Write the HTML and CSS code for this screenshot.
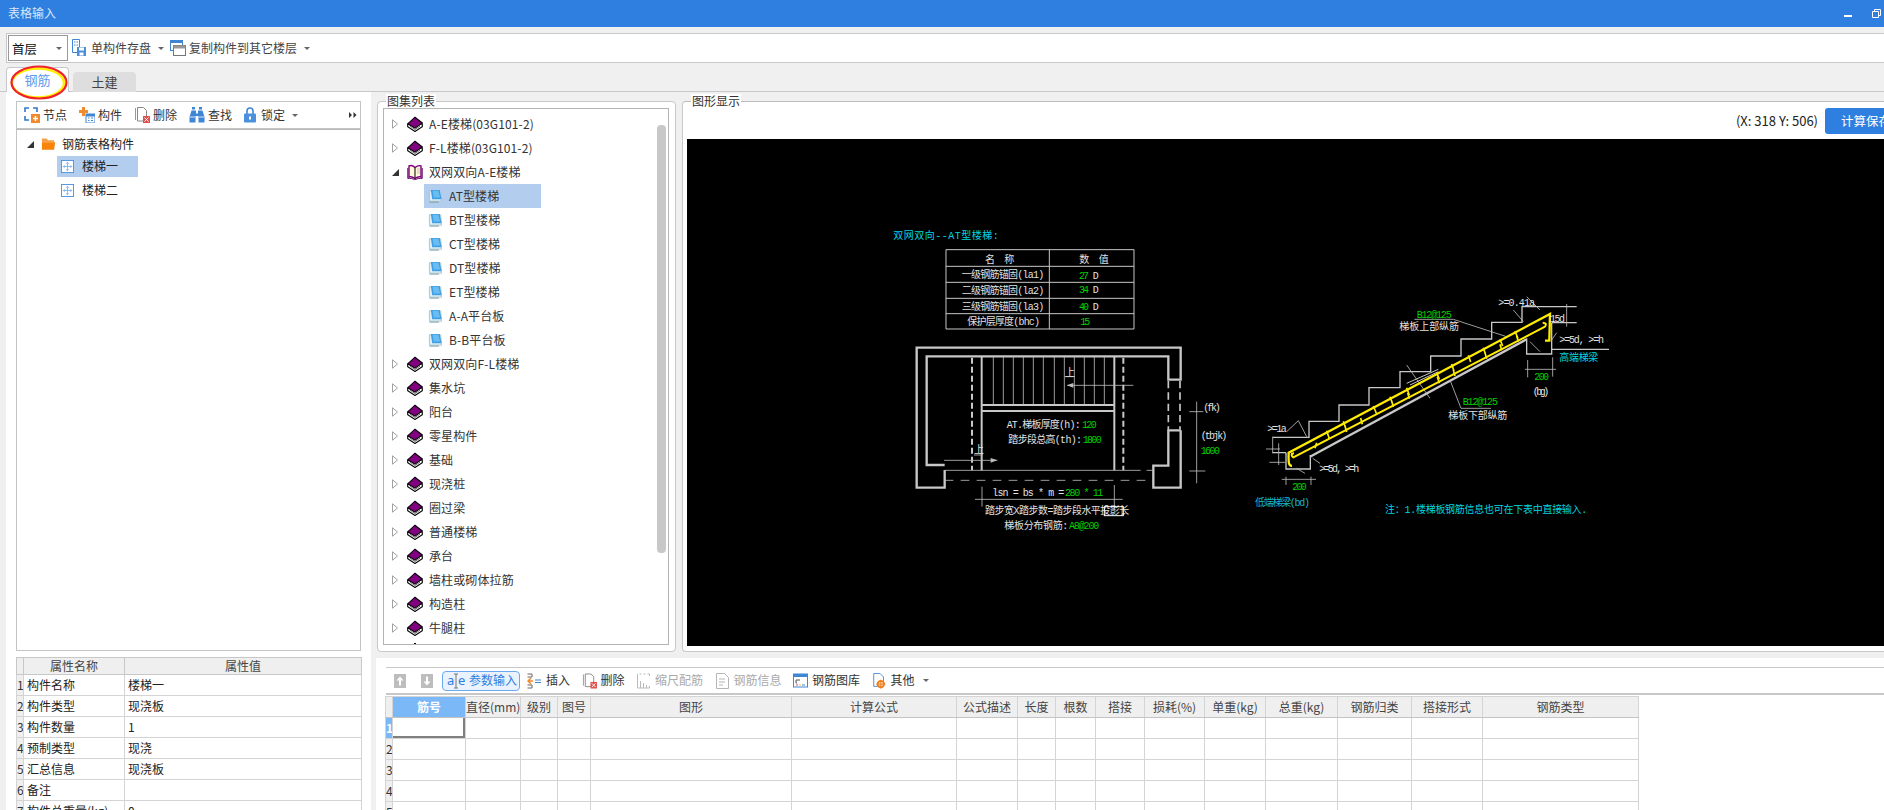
FILE: index.html
```html
<!DOCTYPE html>
<html lang="zh">
<head>
<meta charset="utf-8">
<title>表格输入</title>
<link rel="stylesheet" href="styles.css">
</head>
<body>
<svg class="defs" aria-hidden="true">
  <symbol id="i-book" viewBox="0 0 16 16"><path d="M.7 8v2.600L8 15.500l7.300-4.900V8z" fill="#fff" stroke="#000" stroke-width="1.100"/><path d="M.7 7.800L8 1.200l7.300 5.800L8 12.200z" fill="#800080" stroke="#000" stroke-width="1.100"/><path d="M3 10.200l5 3.300 5-3.300" fill="none" stroke="#555" stroke-width=".8"/></symbol>
  <symbol id="i-open" viewBox="0 0 16 16"><path d="M2 2c2-1 4-.5 6 1.500C10 2 12 1 14 2v11c-2-.5-4 0-6 1.500C6 13 4 12.500 2 13z" fill="#fff8d8" stroke="#800080" stroke-width="1.400"/><path d="M8 3.500v11" stroke="#000"/><path d="M.8 4v10.500c2.500-.5 5 0 7.200 1.500 2.200-1.500 4.700-2 7.200-1.500V4" fill="none" stroke="#600060"/><path d="M10 5h3M10 7h3M10 9h3" stroke="#aaa" stroke-width=".7"/></symbol>
  <symbol id="i-sheet" viewBox="0 0 16 16"><path d="M1.500 2.500h12l1 11H1.500z" fill="#dfeef5" stroke="#a9c4d2"/><path d="M3 1.500h9.500l2 10H4.500z" fill="#3f9fe6"/><path d="M5 2.500h6l2 7H6z" fill="#69bdf0"/><path d="M1.500 14.500h10" stroke="#7d97a5"/></symbol>
  <symbol id="i-folder" viewBox="0 0 16 14"><path d="M1 1h5l1.500 2H14v2H1z" fill="#f7a04a"/><path d="M1 5h14l-1 8H1z" fill="#f88308"/></symbol>
  <symbol id="i-item" viewBox="0 0 14 14"><rect x=".5" y=".5" width="13" height="13" fill="#fff" stroke="#4c94e0"/><path d="M7 2.500v9M2.500 7h9M5.500 4L7 2.500 8.500 4M5.500 10L7 11.500 8.500 10M4 5.500L2.500 7 4 8.500M10 5.500L11.500 7 10 8.500" fill="none" stroke="#78aee8" stroke-width=".9"/></symbol>
  <symbol id="i-node" viewBox="0 0 16 16"><path d="M1 5V1h4M9 1h4v4M1 9v4h4" fill="none" stroke="#2c79c9" stroke-width="1.600"/><rect x="7" y="7" width="9" height="9" fill="#f08a2c"/><path d="M11.500 9v5M9 11.500h5" stroke="#fff" stroke-width="1.400"/></symbol>
  <symbol id="i-comp" viewBox="0 0 16 16"><path d="M3 0h3v3h3v3H6v3H3V6H0V3h3z" fill="#f08a2c"/><rect x="7" y="7" width="9" height="9" fill="#fff" stroke="#3f86d4"/><rect x="7" y="7" width="9" height="2.500" fill="#3f86d4"/><path d="M9 11h1.500M12 11h2M9 13.500h1.500M12 13.500h2" stroke="#3f86d4"/></symbol>
  <symbol id="i-del" viewBox="0 0 16 16"><path d="M1.500 1v12" stroke="#999"/><path d="M3.500.5h6l3 3V14h-9z" fill="#fff" stroke="#888"/><rect x="9" y="9" width="7" height="7" fill="#e0504f"/><path d="M10.500 10.500l4 4M14.500 10.500l-4 4" stroke="#fff"/></symbol>
  <symbol id="i-find" viewBox="0 0 16 16"><path d="M3 0h3v2.500H3zM10 0h3v2.500h-3z" fill="#3f86d4"/><path d="M2.500 3.500h4.500v3h2v-3h4.500L15.500 10v5.500H9.500V9H6.500v6.500H.5V10z" fill="#3f86d4"/><path d="M1 10h5M10 10h5" stroke="#fff" stroke-width=".8"/></symbol>
  <symbol id="i-lock" viewBox="0 0 12 16"><path d="M3 7V4a3 3 0 016 0v3" fill="none" stroke="#3f86d4" stroke-width="1.600"/><rect y="6.500" width="12" height="9" rx="1" fill="#4a90dd"/><rect x="5" y="9.500" width="2" height="3" fill="#fff"/></symbol>
  <symbol id="i-save" viewBox="0 0 14 18"><path d="M.5.500h7v13h-7z" fill="#fff" stroke="#3f86d4"/><path d="M2 3h1.500M4.500 3H6M2 6h1.500M4.500 6H6" stroke="#3f86d4"/><rect x="5" y="8" width="9" height="9" fill="#4a8fd8"/><rect x="7" y="8.500" width="5" height="3" fill="#fff"/><rect x="7.500" y="13.500" width="4" height="3" fill="#fff"/></symbol>
  <symbol id="i-copy" viewBox="0 0 16 16"><rect x=".5" y=".5" width="12" height="10" fill="#fff" stroke="#3f86d4"/><rect x=".5" y=".5" width="12" height="2.500" fill="#3f86d4"/><rect x="3.500" y="5.500" width="12" height="10" fill="#fff" stroke="#777"/><rect x="3.500" y="5.500" width="12" height="3" fill="#999"/></symbol>
  <symbol id="i-up" viewBox="0 0 12 14"><rect width="12" height="14" fill="#bdbdbd"/><path d="M6 2.500L2.500 6.500H5v5h2v-5h2.500z" fill="#fff"/></symbol>
  <symbol id="i-down" viewBox="0 0 12 14"><rect width="12" height="14" fill="#bdbdbd"/><path d="M6 11.500L2.500 7.500H5v-5h2v5h2.500z" fill="#fff"/></symbol>
  <symbol id="i-insert" viewBox="0 0 15 16"><path d="M.5 1H5v3H.5M.5 12H5v3H.5" fill="none" stroke="#666"/><path d="M1 8h5M4 5L1 8l3 3" fill="none" stroke="#f08a2c" stroke-width="1.500"/><path d="M8 7h6M8 9.500h6" stroke="#3f86d4" stroke-width="1.200"/></symbol>
  <symbol id="i-scale" viewBox="0 0 14 16"><path d="M1 1v14M1 15h12M4 15V8M7 15v-5M10 15v-3M13 15v-2" fill="none" stroke="#bbb"/><path d="M3 1h2M7 1h2M11 1h2v2" fill="none" stroke="#bbb"/></symbol>
  <symbol id="i-doc" viewBox="0 0 14 16"><path d="M1 .5h8l4 4V15.500H1z" fill="#fff" stroke="#b5b5b5"/><path d="M3.500 6h6M3.500 9h6M3.500 12h4" stroke="#b5b5b5"/></symbol>
  <symbol id="i-lib" viewBox="0 0 15 15"><rect x=".5" y=".5" width="14" height="13" fill="#fff" stroke="#3f86d4"/><rect x=".5" y=".5" width="14" height="3" fill="#3f86d4"/><path d="M3 6.500h4M3 6.500v3M3 9.500h1" stroke="#555"/><path d="M3 11.500h2" stroke="#e0504f"/><path d="M6 11.500h2" stroke="#f3c331"/><path d="M9 11.500h3" stroke="#3f86d4"/></symbol>
  <symbol id="i-other" viewBox="0 0 14 18"><path d="M.5.500h7l4 4V15H.5z" fill="#fff" stroke="#3f86d4"/><circle cx="8.500" cy="12.500" r="3.600" fill="none" stroke="#f08020" stroke-width="2.200"/><path d="M8.500 7.500v10M3.500 12.500h10" stroke="#f08020" stroke-width="1.200"/></symbol>
  <symbol id="i-more" viewBox="0 0 8 8"><path d="M0 1l3 3-3 3zM4.500 1l3 3-3 3z" fill="#333"/></symbol>
  <symbol id="i-closed" viewBox="0 0 6 10"><path d="M.5.800l5 4.200-5 4.200z" fill="#fff" stroke="#a0a0a0"/></symbol>
  <symbol id="i-opened" viewBox="0 0 7 7"><path d="M7 0v7H0z" fill="#333"/></symbol>
  <symbol id="i-restore" viewBox="0 0 9 9"><path d="M2.500 2.500V.5h6v6h-2M.5 2.500h6v6h-6z" fill="none" stroke="#fff"/></symbol>
</svg>

<div class="app">
  <header class="titlebar">
    <span class="title">表格输入</span>
    <span class="minimize"></span>
    <svg class="restore"><use href="#i-restore"/></svg>
  </header>

  <div class="floorbar">
    <div class="floor-select"><span>首层</span><i class="caret"></i></div>
    <div class="fb-item"><svg class="ic-save"><use href="#i-save"/></svg><span>单构件存盘</span><i class="caret"></i></div>
    <div class="fb-item"><svg class="ic16"><use href="#i-copy"/></svg><span>复制构件到其它楼层</span><i class="caret"></i></div>
  </div>

  <div class="tabs">
    <div class="tab tab-active">钢筋</div>
    <div class="tab">土建</div>
    <svg class="tab-mark" viewBox="0 0 60 36"><ellipse cx="29" cy="18" rx="26" ry="14.500" fill="none" stroke="#ffee00" stroke-width="2.500"/><ellipse cx="30" cy="17.500" rx="27.500" ry="16" fill="none" stroke="#f0212a" stroke-width="2.200"/></svg>
  </div>

  <main class="workspace">
    <aside class="left">
      <div class="toolbar left-tools">
        <div class="btn"><svg class="ic16"><use href="#i-node"/></svg><span>节点</span></div>
        <div class="btn"><svg class="ic16"><use href="#i-comp"/></svg><span>构件</span></div>
        <div class="btn"><svg class="ic16"><use href="#i-del"/></svg><span>删除</span></div>
        <div class="btn"><svg class="ic16"><use href="#i-find"/></svg><span>查找</span></div>
        <div class="btn"><svg class="ic-lock"><use href="#i-lock"/></svg><span>锁定</span><i class="caret caret-gap"></i></div>
        <svg class="ic-more"><use href="#i-more"/></svg>
      </div>
      <div class="comp-tree">
        <div class="ct-root"><svg class="tw-open"><use href="#i-opened"/></svg><svg class="ic-folder"><use href="#i-folder"/></svg><span>钢筋表格构件</span></div>
        <div class="ct-item ct-selected"><svg class="ic-item"><use href="#i-item"/></svg><span>楼梯一</span></div>
        <div class="ct-item"><svg class="ic-item"><use href="#i-item"/></svg><span>楼梯二</span></div>
      </div>
      <table class="props">
        <colgroup><col class="p-n"><col class="p-k"><col class="p-v"></colgroup>
        <thead><tr><th></th><th>属性名称</th><th>属性值</th></tr></thead>
        <tbody>
          <tr><td class="num">1</td><td>构件名称</td><td>楼梯一</td></tr>
          <tr><td class="num">2</td><td>构件类型</td><td>现浇板</td></tr>
          <tr><td class="num">3</td><td>构件数量</td><td>1</td></tr>
          <tr><td class="num">4</td><td>预制类型</td><td>现浇</td></tr>
          <tr><td class="num">5</td><td>汇总信息</td><td>现浇板</td></tr>
          <tr><td class="num">6</td><td>备注</td><td></td></tr>
          <tr><td class="num">7</td><td>构件总重量(kg)</td><td>0</td></tr>
        </tbody>
      </table>
    </aside>

    <section class="main">
      <div class="upper">
        <div class="group group-list">
          <span class="legend">图集列表</span>
          <div class="atlas">
            <div class="row"><svg class="tw"><use href="#i-closed"/></svg><svg class="ic-book"><use href="#i-book"/></svg><span>A-E楼梯(03G101-2)</span></div>
            <div class="row"><svg class="tw"><use href="#i-closed"/></svg><svg class="ic-book"><use href="#i-book"/></svg><span>F-L楼梯(03G101-2)</span></div>
            <div class="row"><svg class="tw tw-o"><use href="#i-opened"/></svg><svg class="ic-book"><use href="#i-open"/></svg><span>双网双向A-E楼梯</span></div>
            <div class="row child child-selected"><svg class="ic-sheet"><use href="#i-sheet"/></svg><span>AT型楼梯</span></div>
            <div class="row child"><svg class="ic-sheet"><use href="#i-sheet"/></svg><span>BT型楼梯</span></div>
            <div class="row child"><svg class="ic-sheet"><use href="#i-sheet"/></svg><span>CT型楼梯</span></div>
            <div class="row child"><svg class="ic-sheet"><use href="#i-sheet"/></svg><span>DT型楼梯</span></div>
            <div class="row child"><svg class="ic-sheet"><use href="#i-sheet"/></svg><span>ET型楼梯</span></div>
            <div class="row child"><svg class="ic-sheet"><use href="#i-sheet"/></svg><span>A-A平台板</span></div>
            <div class="row child"><svg class="ic-sheet"><use href="#i-sheet"/></svg><span>B-B平台板</span></div>
            <div class="row"><svg class="tw"><use href="#i-closed"/></svg><svg class="ic-book"><use href="#i-book"/></svg><span>双网双向F-L楼梯</span></div>
            <div class="row"><svg class="tw"><use href="#i-closed"/></svg><svg class="ic-book"><use href="#i-book"/></svg><span>集水坑</span></div>
            <div class="row"><svg class="tw"><use href="#i-closed"/></svg><svg class="ic-book"><use href="#i-book"/></svg><span>阳台</span></div>
            <div class="row"><svg class="tw"><use href="#i-closed"/></svg><svg class="ic-book"><use href="#i-book"/></svg><span>零星构件</span></div>
            <div class="row"><svg class="tw"><use href="#i-closed"/></svg><svg class="ic-book"><use href="#i-book"/></svg><span>基础</span></div>
            <div class="row"><svg class="tw"><use href="#i-closed"/></svg><svg class="ic-book"><use href="#i-book"/></svg><span>现浇桩</span></div>
            <div class="row"><svg class="tw"><use href="#i-closed"/></svg><svg class="ic-book"><use href="#i-book"/></svg><span>圈过梁</span></div>
            <div class="row"><svg class="tw"><use href="#i-closed"/></svg><svg class="ic-book"><use href="#i-book"/></svg><span>普通楼梯</span></div>
            <div class="row"><svg class="tw"><use href="#i-closed"/></svg><svg class="ic-book"><use href="#i-book"/></svg><span>承台</span></div>
            <div class="row"><svg class="tw"><use href="#i-closed"/></svg><svg class="ic-book"><use href="#i-book"/></svg><span>墙柱或砌体拉筋</span></div>
            <div class="row"><svg class="tw"><use href="#i-closed"/></svg><svg class="ic-book"><use href="#i-book"/></svg><span>构造柱</span></div>
            <div class="row"><svg class="tw"><use href="#i-closed"/></svg><svg class="ic-book"><use href="#i-book"/></svg><span>牛腿柱</span></div>
            <div class="scrollthumb"></div>
            <i class="clip-dot"></i>
          </div>
        </div>

        <div class="group group-view">
          <span class="legend legend-view">图形显示</span>
          <div class="viewhead">
            <span class="coords">(X: 318 Y: 506)</span>
            <div class="calc">计算保存</div>
          </div>
          <svg class="cad" viewBox="687 139 1197 507" preserveAspectRatio="xMinYMin meet">
            <g transform="translate(870 215) scale(.33333)">
              <text class="t cy" x="70" y="64" textLength="316">双网双向--AT型楼梯:</text>
              <path class="w2" d="M228 104H792V342H228zM228 154H792M228 202H792M228 250H792M228 296H792M538 104V342" stroke-width="3"/>
              <text class="t wh" x="345" y="136" textLength="88">名 称</text>
              <text class="t wh" x="628" y="136" textLength="88">数 值</text>
              <text class="t wh" x="275" y="182" textLength="248">一级钢筋锚固(la1)</text>
              <text class="t wh" x="275" y="230" textLength="248">二级钢筋锚固(la2)</text>
              <text class="t wh" x="275" y="277" textLength="248">三级钢筋锚固(la3)</text>
              <text class="t wh" x="292" y="322" textLength="218">保护层厚度(bhc)</text>
              <text class="t gr" x="627" y="184" textLength="30">27</text><text class="t wh" x="668" y="184">D</text>
              <text class="t gr" x="627" y="227" textLength="30">34</text><text class="t wh" x="668" y="227">D</text>
              <text class="t gr" x="627" y="277" textLength="30">40</text><text class="t wh" x="668" y="277">D</text>
              <text class="t gr" x="631" y="322" textLength="30">15</text>

              <path class="w2" stroke-width="7" d="M224 765V818H140V398H932V494H895V424H170V750H224M932 646V818H850V752H895V646H932"/>
              <path class="w2" stroke-width="6" d="M335 424V766M733 424V766M335 570H733M335 588H733"/>
              <path class="w2" stroke-width="6" stroke-dasharray="18 9" d="M306 428V766M760 428V766"/>
              <path class="w2" stroke-width="5" stroke-dasharray="22 12" d="M895 498V644M930 498V644"/>
              <path class="w1" d="M370 424V570M400 424V570M430 424V570M460 424V570M490 424V570M520 424V570M553 424V570M583 424V570M613 424V570M643 424V570M673 424V570M703 424V570"/>
              <path class="w1" stroke-width="3" d="M224 766H812M830 766H848"/>
              <path class="w1" stroke-width="3" stroke-dasharray="26 22" d="M224 796H850"/>
              <path class="w1" stroke-width="2.500" d="M592 511H790M222 736H382M584 485H610M312 720H338"/>
              <path class="f" d="M590 511l20-7v14zM382 736l-20-7v14z"/>
              <text class="t wh" x="585" y="475">上</text>
              <text class="t wh" x="312" y="707">上</text>
              <path class="w1" stroke-width="2" d="M980 560V805M958 590H1000M958 768H1006M315 853H758M336 815V875M733 810V885"/>
              <text class="t wh" x="1000" y="582" textLength="52">(fk)</text>
              <text class="t wh" x="992" y="665" textLength="80">(tbjk)</text>
              <text class="t gr" x="992" y="710" textLength="58">1600</text>
              <text class="t wh" x="410" y="632" textLength="222">AT.梯板厚度(h):</text>
              <text class="t gr" x="636" y="632" textLength="44">120</text>
              <text class="t wh" x="415" y="676" textLength="221">踏步段总高(th):</text>
              <text class="t gr" x="638" y="676" textLength="57">1800</text>
              <text class="t wh" x="367" y="835" textLength="216" xml:space="preserve">lsn = bs * m =</text>
              <text class="t gr" x="585" y="835" textLength="115" xml:space="preserve">280 * 11</text>
              <text class="t wh" x="345" y="890" textLength="433">踏步宽X踏步数=踏步段水平投影长</text>
              <rect x="703" y="875" width="57" height="27" fill="none" stroke="#fff" stroke-width="3"/>
              <text class="t wh" x="403" y="935" textLength="192">梯板分布钢筋:</text>
              <text class="t gr" x="597" y="935" textLength="91">A8@200</text>
            </g>
            <g transform="translate(1230 280) scale(.33333)">
              <path class="w2" stroke-width="4" d="M128 472H237V424H327V375H417V323H510V275H602V228H693V177H785V127H876V80H1040M965 128H1040M965 128V222H890V175M168 518V567H241V525M128 518H168M965 208H1137"/>
              <path class="w2" stroke-width="7" d="M240 530L890 178"/>
              <path class="w2" stroke-width="3" d="M530 310L625 268M540 315L625 275"/>
              <path class="w1" stroke-width="2" d="M670 118L830 170M553 118H670M693 385L660 300M693 385H783M530 255L600 355M850 90L880 125M890 50L930 90M1010 72V140M980 158L965 180M900 185L930 215M885 268H978M893 240V292M968 232V290M155 598H258M168 590V615M243 590V615M128 470V520M108 507H150M118 547H165M146 490V555M170 455L205 422L230 470M248 535L270 550M200 565L225 580"/>
              <path class="y" stroke-width="7" d="M186 558C176 558 175 550 176 518L960 102L958 182H945"/>
              <path class="y" stroke-width="6" d="M945 140L190 532C183 528 183 520 192 520M945 140C950 132 948 128 938 128"/>
              <path class="y" stroke-width="5" d="M290 452L298 476M340 424L348 448M430 378L440 402M480 350L488 372M530 323L538 346M620 278L628 298M665 252L672 274M715 226L722 246M760 203L766 222M810 178L818 198M855 153L864 176M255 505L260 488M350 456L345 438M397 433L392 414M490 381L485 363M538 356L533 338M628 310L622 290M675 288L670 270M770 236L765 218M815 211L810 193M865 185L860 168"/>
              <text class="t gr" x="560" y="107" textLength="105">B12@125</text>
              <text class="t wh" x="508" y="143" textLength="179">梯板上部纵筋</text>
              <text class="t gr" x="698" y="368" textLength="106">B12@125</text>
              <text class="t wh" x="655" y="410" textLength="177">梯板下部纵筋</text>
              <text class="t wh" x="805" y="72" textLength="110">&gt;=0.41a</text>
              <text class="t wh" x="960" y="118" textLength="45">15d</text>
              <text class="t wh" x="988" y="182" textLength="134">&gt;=5d, &gt;=h</text>
              <text class="t cy" x="988" y="237" textLength="117">高端梯梁</text>
              <text class="t gr" x="913" y="292" textLength="44">200</text>
              <text class="t wh" x="908" y="338" textLength="50">(bg)</text>
              <text class="t wh" x="112" y="450" textLength="58">&gt;=1a</text>
              <text class="t wh" x="268" y="570" textLength="120">&gt;=5d, &gt;=h</text>
              <text class="t gr" x="187" y="623" textLength="43">200</text>
              <text class="t cyd" x="75" y="670" textLength="165">低端梯梁(bd)</text>
              <text class="t cy" x="465" y="692" textLength="607">注：1.楼梯板钢筋信息也可在下表中直接输入.</text>
            </g>
          </svg>
        </div>
      </div>

      <div class="lower">
        <div class="toolbar grid-tools">
          <div class="btn btn-up"><svg class="ic-arrow"><use href="#i-up"/></svg></div>
          <div class="btn btn-down"><svg class="ic-arrow"><use href="#i-down"/></svg></div>
          <div class="btn btn-active"><svg class="ic-param" viewBox="0 0 18 16"><text x="0" y="12" class="param-t">a</text><text x="11" y="12" class="param-t">e</text><path d="M9 1v14M7 1h4M7 15h4" stroke="#777" fill="none"/></svg><span>参数输入</span></div>
          <div class="btn"><svg class="ic15"><use href="#i-insert"/></svg><span>插入</span></div>
          <div class="btn"><svg class="ic15"><use href="#i-del"/></svg><span>删除</span></div>
          <div class="btn btn-off"><svg class="ic15"><use href="#i-scale"/></svg><span>缩尺配筋</span></div>
          <div class="btn btn-off"><svg class="ic15"><use href="#i-doc"/></svg><span>钢筋信息</span></div>
          <div class="btn"><svg class="ic15"><use href="#i-lib"/></svg><span>钢筋图库</span></div>
          <div class="btn"><svg class="ic15"><use href="#i-other"/></svg><span>其他</span><i class="caret caret-gap"></i></div>
        </div>
        <table class="rebar">
          <colgroup>
            <col class="c7"><col class="c73"><col class="c55"><col class="c37"><col class="c33"><col class="c201"><col class="c165"><col class="c61"><col class="c38"><col class="c40"><col class="c49"><col class="c60"><col class="c61"><col class="c72"><col class="c74"><col class="c71"><col class="c156">
          </colgroup>
          <thead>
            <tr><th></th><th class="hot">筋号</th><th>直径(mm)</th><th>级别</th><th>图号</th><th>图形</th><th>计算公式</th><th>公式描述</th><th>长度</th><th>根数</th><th>搭接</th><th>损耗(%)</th><th>单重(kg)</th><th>总重(kg)</th><th>钢筋归类</th><th>搭接形式</th><th>钢筋类型</th></tr>
          </thead>
          <tbody>
            <tr><td class="num hot">1</td><td class="cur"></td><td></td><td></td><td></td><td></td><td></td><td></td><td></td><td></td><td></td><td></td><td></td><td></td><td></td><td></td><td></td></tr>
            <tr><td class="num">2</td><td></td><td></td><td></td><td></td><td></td><td></td><td></td><td></td><td></td><td></td><td></td><td></td><td></td><td></td><td></td><td></td></tr>
            <tr><td class="num">3</td><td></td><td></td><td></td><td></td><td></td><td></td><td></td><td></td><td></td><td></td><td></td><td></td><td></td><td></td><td></td><td></td></tr>
            <tr><td class="num">4</td><td></td><td></td><td></td><td></td><td></td><td></td><td></td><td></td><td></td><td></td><td></td><td></td><td></td><td></td><td></td><td></td></tr>
            <tr><td class="num">5</td><td></td><td></td><td></td><td></td><td></td><td></td><td></td><td></td><td></td><td></td><td></td><td></td><td></td><td></td><td></td><td></td></tr>
          </tbody>
        </table>
      </div>
    </section>
  </main>
</div>
</body>
</html>
```
FILE: styles.css
```css
* { box-sizing: border-box; }
html, body { margin: 0; height: 100%; overflow: hidden; }
body {
  font: 12px/1.2 "Noto Sans CJK SC", "Noto Sans", sans-serif;
  color: #222;
  background: #f0f0f0;
}
.defs { display: none; }
svg { display: block; flex: none; }
.app { width: 1884px; height: 810px; display: flex; flex-direction: column; overflow: hidden; }

/* title bar */
.titlebar {
  height: 27px; flex: none; background: #2e7fe0; color: #d9e8fb;
  display: flex; align-items: center; padding-left: 8px;
}
.title { flex: 1; }
.minimize { width: 8px; height: 2px; background: #fff; margin: 4px 20px 0 0; }
.restore { width: 9px; height: 9px; margin: -1px 3px 0 0; }

/* floor bar */
.floorbar {
  margin: 6px 0 0 6px; height: 30px; flex: none; background: #fff;
  border: 1px solid #c8c8cc; border-width: 1px 0 1px 1px;
  display: flex; align-items: center; padding-left: 1px;
}
.floor-select {
  width: 60px; height: 26px; border: 1px solid #9a9a9a;
  display: flex; align-items: center; justify-content: space-between; padding: 0 5px 0 3px;
  font-size: 12.500px; color: #111;
}
.fb-item { display: flex; align-items: center; margin-left: 4px; color: #444; }
.fb-item + .fb-item { margin-left: 6px; }
.fb-item .caret { margin-left: 7px; }
.ic-save { width: 14px; height: 18px; margin-right: 5px; }
.fb-item .ic16 { margin-right: 3px; }
.caret { display: inline-block; width: 0; height: 0; border: 3px solid transparent; border-top: 3px solid #666; border-bottom: 0; }
.caret-gap { margin-left: 4px; }

/* tabs */
.tabs {
  position: relative; height: 29px; flex: none; padding: 4px 0 0 6px;
  display: flex; align-items: flex-end; gap: 4px; border-bottom: 1px solid #c8c8cc;
}
.tab {
  width: 63px; height: 20px; margin-bottom: -1px; background: #dedede; color: #444;
  border-radius: 4px 4px 0 0; text-align: center; line-height: 20px; font-size: 13px;
}
.tab-active {
  height: 25px; background: #fff; color: #5b9bee; line-height: 24px;
  border: 1px solid #c8c8cc; border-bottom: 0; position: relative; z-index: 1;
}
.tab-mark { position: absolute; left: 9px; top: 2px; width: 60px; height: 36px; z-index: 2; }

/* workspace */
.workspace { flex: 1; min-height: 0; display: flex; padding-left: 6px; }
.left {
  width: 365px; flex: none; background: #fff; padding: 9px 10px 0;
  display: flex; flex-direction: column;
}
.toolbar { display: flex; align-items: center; background: #fff; }
.btn { display: flex; align-items: center; gap: 3px; color: #333; white-space: nowrap; }
.ic16 { width: 16px; height: 16px; }
.ic15 { width: 15px; height: 16px; }
.ic-lock { width: 12px; height: 16px; margin: 0 2px 0 0; }
.ic-more { width: 8px; height: 8px; margin-left: auto; margin-right: 2px; }
.left-tools {
  height: 28px; flex: none; gap: 12px; padding: 0 1px 0 7px;
  border: 1px solid #c4c4c4; border-bottom-width: 1px;
}
.comp-tree { height: 522px; flex: none; border: 1px solid #c4c4c4; border-top: 1px solid #b8b8b8; border-bottom-width: 1px; padding-top: 2px; }
.ct-root { height: 24px; display: flex; align-items: center; padding-left: 10px; }
.tw-open { width: 7px; height: 7px; }
.ic-folder { width: 15px; height: 14px; margin: 0 6px 0 7px; }
.ct-item { height: 21px; width: 81px; margin: 0 0 3px 40px; display: flex; align-items: center; padding-left: 4px; gap: 8px; }
.ct-selected { background: #b3cdee; }
.ic-item { width: 13px; height: 13px; }

/* tables */
table { border-collapse: collapse; table-layout: fixed; }
.props { width: 345px; flex: none; margin-top: 6px; background: #fff; }
.p-n { width: 7px; } .p-k { width: 101px; } .p-v { width: 237px; }
.props th { height: 17px; background: #efefef; font-weight: 400; color: #444; border: 1px solid #c8c8c8; padding: 0; }
.props td { height: 21px; border: 1px solid #d4d4d4; padding: 0 0 0 3px; white-space: nowrap; overflow: hidden; }
.props td.num, .rebar td.num { padding: 0; background: #efefef; color: #333; text-align: center; overflow: hidden; font-size: 12px; }

/* middle */
.main { flex: 1; min-width: 0; display: flex; flex-direction: column; padding-left: 5px; }
.upper { height: 560px; flex: none; display: flex; padding: 9px 0 0 1px; gap: 6px; }
.group { position: relative; background: #fff; border: 1px solid #c8c8c8; border-radius: 4px; }
.group-list { width: 299px; flex: none; padding: 6px 6px 6px 5px; }
.group-view { flex: 1; min-width: 0; border-right: 0; border-radius: 4px 0 0 4px; border-top-color: #bcbcbc; padding: 0 0 5px 4px; display: flex; flex-direction: column; }
.legend { position: absolute; left: 8px; top: -8px; background: #fff; padding: 0 1px; line-height: 14px; color: #333; }
.legend-view { left: 8px; }
.atlas { position: relative; height: 537px; overflow: hidden; border: 1px solid #b4b4b4; padding-top: 3px; }
.row { height: 24px; display: flex; align-items: center; padding-left: 8px; color: #333; white-space: nowrap; letter-spacing: .12px; }
.tw { width: 6px; height: 10px; margin-right: 9px; }
.tw-o { width: 7px; height: 7px; margin-right: 8px; }
.ic-book { width: 16px; height: 16px; margin-right: 6px; }
.child { padding-left: 4px; margin-left: 40px; width: 117px; gap: 6px; }
.child-selected { background: #b3cdee; }
.ic-sheet { width: 15px; height: 16px; margin-left: 0; }
.scrollthumb { position: absolute; left: 273px; top: 16px; width: 9px; height: 428px; background: #c8c8c8; border-radius: 4px; }
.clip-dot { position: absolute; left: 30px; bottom: 0; width: 2px; height: 1px; background: #000; }

/* drawing */
.viewhead { height: 37px; flex: none; display: flex; align-items: center; justify-content: flex-end; gap: 7px; }
.coords { color: #222; font-size: 13px; }
.calc {
  width: 59px; height: 26px; background: #2e7fe0; color: #fff; border-radius: 3px 0 0 3px;
  padding-left: 16px; line-height: 26px; white-space: nowrap; overflow: hidden; font-size: 12.500px;
}
.cad { width: 1197px; height: 507px; background: #000; }
.t { font-family: "Liberation Mono", "Noto Sans CJK SC", monospace; font-size: 30px; dominant-baseline: central; }
.wh { fill: #e2e2e2; }
.gr { fill: #00d000; }
.cy { fill: #00d6e0; }
.cyd { fill: #19b8c8; }
.w2 { fill: none; stroke: #c8c8c8; }
.w1 { fill: none; stroke: #bcbcbc; stroke-width: 2.500; }
.f { fill: #bcbcbc; }
.y { fill: none; stroke: #ffec00; }
.param-t { font: 13px "Noto Sans", sans-serif; fill: #2e7fe0; }

/* lower panel */
.lower { flex: 1; min-height: 0; background: #fff; padding: 9px 0 0 10px; margin-top: 6px; overflow: hidden; }
.grid-tools {
  height: 28px; gap: 11.500px; padding-left: 8px;
  border-top: 1px solid #c8c8c8; border-bottom: 2px solid #c8c8c8;
}
.grid-tools .btn { gap: 4px; }
.ic-arrow { width: 12px; height: 14px; }
.btn-up { margin-right: 3.500px; }
.btn-down { margin-right: -2.500px; }
.grid-tools .btn-active {
  width: 78px; height: 20px; padding-left: 4px; gap: 4px; color: #2e7fe0;
  background: #e9f2fd; border: 1px solid #6aa9ef; border-radius: 4px; margin-right: -4.500px;
}
.ic-param { width: 18px; height: 16px; }
.btn-off { color: #aaa; }
.rebar { width: 1253px; margin: 1px 0 0 -1px; }
.c7 { width: 7px; } .c73 { width: 73px; } .c55 { width: 55px; } .c37 { width: 37px; } .c33 { width: 33px; }
.c201 { width: 201px; } .c165 { width: 165px; } .c61 { width: 61px; } .c38 { width: 38px; } .c40 { width: 40px; }
.c49 { width: 49px; } .c60 { width: 60px; } .c72 { width: 72px; } .c74 { width: 74px; } .c71 { width: 71px; } .c156 { width: 156px; }
.rebar th {
  height: 21px; background: #efefef; font-weight: 400; color: #444; padding: 0;
  border: 1px solid #d4d4d4; border-bottom: 1px solid #c4c4c4; white-space: nowrap; overflow: hidden;
}
.rebar td { height: 21px; border: 1px solid #d4d4d4; padding: 0; }
.rebar th.hot { background: #7ab8f8; color: #fff; font-weight: 700; }
.rebar td.num.hot { background: #7ab8f8; color: #fff; font-weight: 700; }
.rebar td.cur { box-shadow: inset -2px -2px 0 #808080; }
```
